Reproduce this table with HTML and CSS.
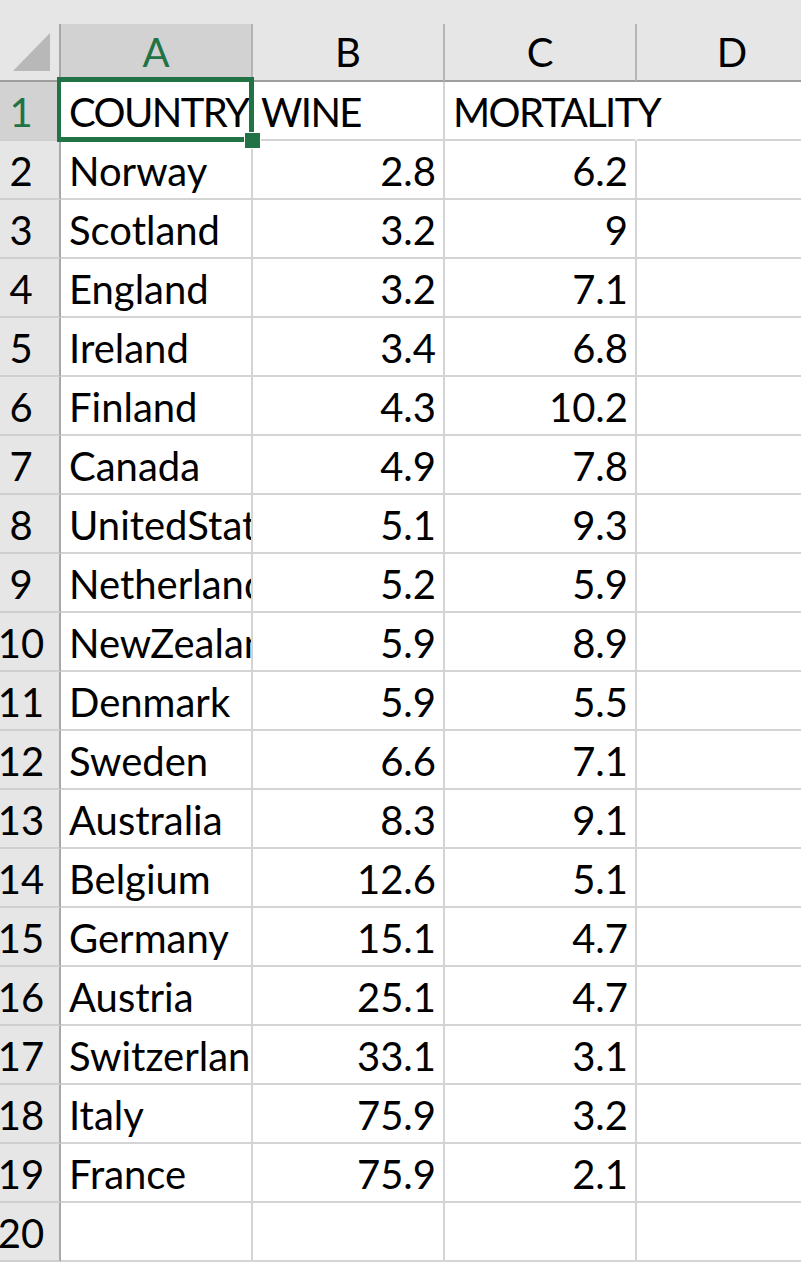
FILE: index.html
```html
<!DOCTYPE html>
<html>
<head>
<meta charset="utf-8">
<link rel="stylesheet" href="styles.css">
</head>
<body>
<div class="sheet">
  <div class="topbar"></div>
  <div class="grid">
    <div class="corner"><svg class="tri" width="59" height="56" viewBox="0 0 59 56"><polygon points="50,9 50,47 13,47" fill="#b8b8b8"/></svg></div>
    <div class="colhead sel">A</div>
    <div class="colhead">B</div>
    <div class="colhead">C</div>
    <div class="colhead">D</div>

    <div class="rowhead sel">1</div>
    <div class="cell caps active">COUNTRY<div class="selbox"></div><div class="handle"></div></div>
    <div class="cell caps">WINE</div>
    <div class="cell caps spill">MORTALITY</div>
    <div class="cell"></div>

    <div class="rowhead">2</div><div class="cell">Norway</div><div class="cell num">2.8</div><div class="cell num">6.2</div><div class="cell"></div>
    <div class="rowhead">3</div><div class="cell">Scotland</div><div class="cell num">3.2</div><div class="cell num">9</div><div class="cell"></div>
    <div class="rowhead">4</div><div class="cell">England</div><div class="cell num">3.2</div><div class="cell num">7.1</div><div class="cell"></div>
    <div class="rowhead">5</div><div class="cell">Ireland</div><div class="cell num">3.4</div><div class="cell num">6.8</div><div class="cell"></div>
    <div class="rowhead">6</div><div class="cell">Finland</div><div class="cell num">4.3</div><div class="cell num">10.2</div><div class="cell"></div>
    <div class="rowhead">7</div><div class="cell">Canada</div><div class="cell num">4.9</div><div class="cell num">7.8</div><div class="cell"></div>
    <div class="rowhead">8</div><div class="cell">UnitedStates</div><div class="cell num">5.1</div><div class="cell num">9.3</div><div class="cell"></div>
    <div class="rowhead">9</div><div class="cell">Netherlands</div><div class="cell num">5.2</div><div class="cell num">5.9</div><div class="cell"></div>
    <div class="rowhead">10</div><div class="cell">NewZealand</div><div class="cell num">5.9</div><div class="cell num">8.9</div><div class="cell"></div>
    <div class="rowhead">11</div><div class="cell">Denmark</div><div class="cell num">5.9</div><div class="cell num">5.5</div><div class="cell"></div>
    <div class="rowhead">12</div><div class="cell">Sweden</div><div class="cell num">6.6</div><div class="cell num">7.1</div><div class="cell"></div>
    <div class="rowhead">13</div><div class="cell">Australia</div><div class="cell num">8.3</div><div class="cell num">9.1</div><div class="cell"></div>
    <div class="rowhead">14</div><div class="cell">Belgium</div><div class="cell num">12.6</div><div class="cell num">5.1</div><div class="cell"></div>
    <div class="rowhead">15</div><div class="cell">Germany</div><div class="cell num">15.1</div><div class="cell num">4.7</div><div class="cell"></div>
    <div class="rowhead">16</div><div class="cell">Austria</div><div class="cell num">25.1</div><div class="cell num">4.7</div><div class="cell"></div>
    <div class="rowhead">17</div><div class="cell">Switzerland</div><div class="cell num">33.1</div><div class="cell num">3.1</div><div class="cell"></div>
    <div class="rowhead">18</div><div class="cell">Italy</div><div class="cell num">75.9</div><div class="cell num">3.2</div><div class="cell"></div>
    <div class="rowhead">19</div><div class="cell">France</div><div class="cell num">75.9</div><div class="cell num">2.1</div><div class="cell"></div>
    <div class="rowhead">20</div><div class="cell"></div><div class="cell"></div><div class="cell"></div><div class="cell"></div>
  </div>
</div>
</body>
</html>
```

FILE: styles.css
```css
html, body {
  margin: 0;
  padding: 0;
  background: #ffffff;
  overflow: hidden;
}
.sheet {
  width: 801px;
  height: 1264px;
  overflow: hidden;
  background: #ffffff;
  font-family: "Lato", "Open Sans", sans-serif;
  font-size: 40px;
  color: #000000;
}
.topbar {
  height: 24px;
  background: #e6e6e6;
}
.grid {
  display: grid;
  grid-template-columns: 61px 192px 192px 192px 192px;
  grid-template-rows: 58px;
  grid-auto-rows: 59px;
  width: 828px;
}
.corner {
  background: #e6e6e6;
  border-right: 2px solid #a8a8a8;
  border-bottom: 2px solid #9e9e9e;
}
.tri {
  display: block;
}
.colhead {
  background: #e6e6e6;
  border-right: 2px solid #b4b4b4;
  border-bottom: 2px solid #9e9e9e;
  display: flex;
  align-items: center;
  justify-content: center;
  line-height: 1;
  padding-bottom: 1px;
}
.colhead.sel {
  background: #d2d2d2;
  color: #217346;
}
.rowhead {
  background: #e6e6e6;
  border-right: 2px solid #a8a8a8;
  border-bottom: 2px solid #cfcfcf;
  display: flex;
  align-items: flex-end;
  justify-content: center;
  padding: 0 17px 7px 0;
  line-height: 1;
}
.rowhead.sel {
  background: #d2d2d2;
  color: #217346;
}
.cell {
  border-right: 2px solid #d4d4d4;
  border-bottom: 2px solid #d4d4d4;
  display: flex;
  align-items: flex-end;
  padding: 0 7px 7px 8px;
  line-height: 1;
  white-space: nowrap;
  overflow: hidden;
  min-width: 0;
}
.cell.caps {
  letter-spacing: -1.6px;
}
.cell.num {
  justify-content: flex-end;
}
.cell.spill {
  overflow: visible;
  border-right-color: #ffffff;
}
.cell.active {
  position: relative;
  overflow: visible;
}
.selbox {
  position: absolute;
  left: -4px;
  top: -5px;
  right: -3px;
  bottom: -3px;
  border-style: solid;
  border-color: #217346;
  border-width: 5px 5px 5px 4px;
  pointer-events: none;
}
.handle {
  position: absolute;
  left: 183px;
  top: 50px;
  width: 15px;
  height: 15px;
  background: #217346;
  border: 1px solid #ffffff;
}
```
